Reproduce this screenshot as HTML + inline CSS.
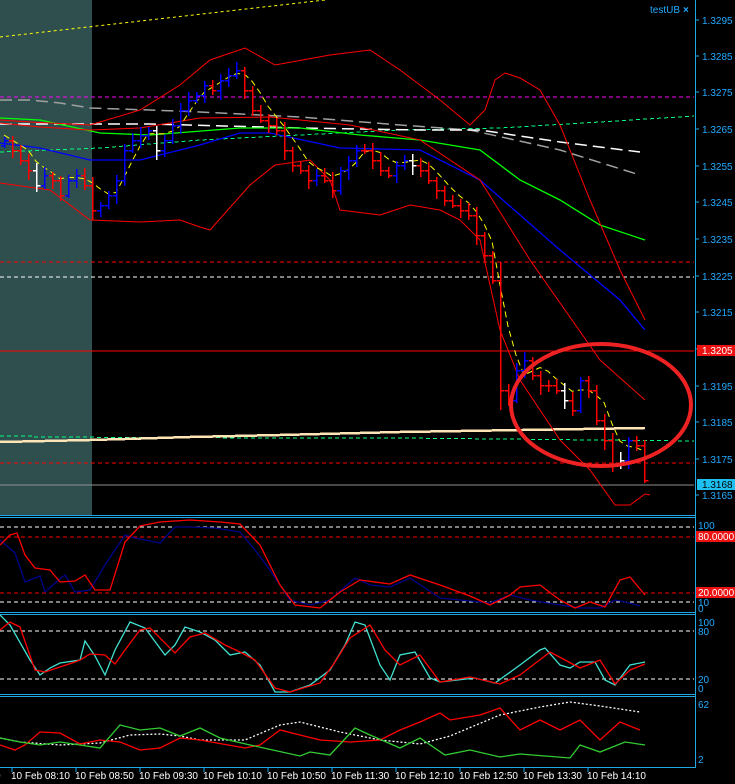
<!DOCTYPE html>
<html><head><meta charset="utf-8"><style>
html,body{margin:0;padding:0;background:#000;width:735px;height:784px;overflow:hidden}
svg{display:block}
text{font-family:"Liberation Sans",sans-serif;font-size:10px}
</style></head><body>
<svg id="s" width="735" height="784" xmlns="http://www.w3.org/2000/svg" shape-rendering="crispEdges">
<rect width="735" height="784" fill="#000"/>
<rect x="0" y="0" width="92" height="515" fill="#2f4f4f"/>
<line x1="0" y1="37" x2="325" y2="0" stroke="#ffff00" stroke-dasharray="3,3" shape-rendering="auto"/>
<line x1="0" y1="97" x2="694" y2="97" stroke="#ff00ff" stroke-dasharray="4,3"/>
<polyline points="0,152 100,148 200,140 300,135 400,130 500,128 600,122 694,116" fill="none" stroke="#00ff7f" stroke-dasharray="4,3"/>
<line x1="0" y1="262" x2="694" y2="262" stroke="#ff0000" stroke-dasharray="4,3"/>
<line x1="0" y1="277" x2="694" y2="277" stroke="#ffffff" stroke-dasharray="4,3"/>
<line x1="0" y1="351" x2="694" y2="351" stroke="#ff0000"/>
<polyline points="0,436 34,436 34,437 280,438 400,438 694,441" fill="none" stroke="#00ff7f" stroke-dasharray="4,3"/>
<polyline points="0,442 45,441 90,440 125,439 190,437 280,435 400,432 645,428" fill="none" stroke="#ffe4b5" stroke-width="2.5"/>
<line x1="0" y1="463" x2="694" y2="463" stroke="#ff0000" stroke-dasharray="4,3"/>
<line x1="0" y1="485" x2="694" y2="485" stroke="#909090"/>
<g id="ind" fill="none" shape-rendering="auto" stroke-width="1"></g>
<g id="bars"></g>
<ellipse cx="601" cy="405" rx="90" ry="61" fill="none" stroke="#ee2222" stroke-width="4" shape-rendering="auto"/>
<line x1="0" y1="527" x2="694" y2="527" stroke="#fff" stroke-dasharray="4,3"/>
<line x1="0" y1="537" x2="694" y2="537" stroke="#ff0000" stroke-dasharray="4,3"/>
<line x1="0" y1="593" x2="694" y2="593" stroke="#ff0000" stroke-dasharray="4,3"/>
<line x1="0" y1="602" x2="694" y2="602" stroke="#fff" stroke-dasharray="4,3"/>
<line x1="0" y1="631" x2="694" y2="631" stroke="#fff" stroke-dasharray="4,3"/>
<line x1="0" y1="679" x2="694" y2="679" stroke="#fff" stroke-dasharray="4,3"/>
<g fill="none" shape-rendering="auto">
<polyline stroke="#00008b" stroke-width="1.3" points="0,540 15,553 25,582 40,576 45,592 55,583 65,575 75,592 90,590 105,565 125,535 135,538 150,541 160,543 175,527 190,527 215,528 240,532 255,550 270,570 290,600 310,605 330,600 355,578 370,585 390,587 410,578 425,588 440,598 470,601 490,603 510,595 530,600 560,605 580,608 600,608 615,600 625,602 640,606"/>
<polyline stroke="#ff0000" stroke-width="1.3" points="0,545 10,535 17,533 25,555 35,568 50,570 60,582 75,581 85,575 95,590 110,590 125,542 140,526 160,522 190,520 220,522 240,524 260,545 280,585 295,605 320,608 340,592 360,580 390,584 410,575 440,585 470,596 490,605 510,595 520,587 540,585 560,600 575,608 590,602 605,607 620,580 630,577 645,595"/>
<polyline stroke="#40e0d0" stroke-width="1.3" points="0,615 10,625 30,660 40,675 50,668 60,663 80,660 85,641 95,656 105,675 115,650 130,622 145,628 165,655 175,645 185,627 200,632 215,640 230,655 245,652 260,665 275,692 290,692 310,685 330,670 345,645 355,622 365,625 380,665 390,680 400,655 415,652 430,678 440,682 475,678 495,683 520,665 540,650 545,648 560,665 570,668 580,662 595,662 605,680 615,685 630,665 645,662"/>
<polyline stroke="#ff0000" stroke-width="1.3" points="0,630 10,622 20,627 35,670 45,672 75,662 80,660 90,654 105,655 115,664 125,650 140,630 150,628 175,653 190,637 205,633 225,645 240,652 255,660 275,688 290,692 320,683 335,662 350,638 370,625 385,650 400,665 420,655 440,682 470,677 500,684 520,675 550,652 565,660 580,668 600,660 615,684 630,670 645,664"/>
<polyline stroke="#ffffff" stroke-dasharray="2,2" stroke-width="1.3" points="0,738 20,742 60,745 100,743 130,735 160,734 180,736 200,740 245,740 280,725 300,722 340,732 380,740 420,744 450,736 500,715 540,707 570,702 600,706 640,712"/>
<polyline stroke="#ff0000" stroke-width="1.3" points="0,745 15,750 25,745 40,732 60,733 80,744 100,740 120,742 140,750 160,748 180,738 200,740 245,748 260,745 280,730 300,735 320,740 350,742 380,740 400,730 420,722 440,713 450,720 480,715 500,708 520,730 540,720 560,730 580,720 600,740 620,722 640,730"/>
<polyline stroke="#32cd32" stroke-width="1.3" points="0,738 20,742 40,745 60,742 80,745 100,748 120,725 140,730 160,728 180,736 200,728 220,738 250,745 300,756 310,752 330,755 355,728 370,735 400,748 420,738 445,755 470,750 500,757 520,754 570,758 580,745 600,752 625,742 645,745"/>
</g>
<g stroke="#1ea8e8" fill="none">
<line x1="695.5" y1="0" x2="695.5" y2="768"/>
<line x1="0" y1="515.5" x2="696" y2="515.5"/>
<line x1="0" y1="517.5" x2="696" y2="517.5"/>
<line x1="0" y1="612.5" x2="696" y2="612.5"/>
<line x1="0" y1="614.5" x2="696" y2="614.5"/>
<line x1="0" y1="694.5" x2="696" y2="694.5"/>
<line x1="0" y1="696.5" x2="696" y2="696.5"/>
<line x1="0" y1="767.5" x2="696" y2="767.5"/>
</g>
<g id="ticks" stroke="#1ea8e8"></g>
<g fill="#22aaff">
<text x="650" y="13" font-size="10">testUB</text><text x="683" y="13" font-weight="bold">×</text>
<text x="702" y="24">1.3295</text><text x="702" y="60">1.3285</text><text x="702" y="96">1.3275</text>
<text x="702" y="133">1.3265</text><text x="702" y="170">1.3255</text><text x="702" y="206">1.3245</text>
<text x="702" y="243">1.3235</text><text x="702" y="280">1.3225</text><text x="702" y="316">1.3215</text>
<text x="702" y="390">1.3195</text><text x="702" y="426">1.3185</text><text x="702" y="463">1.3175</text>
<text x="702" y="499">1.3165</text>
</g>
<rect x="697" y="345" width="38" height="11" fill="#ee1111"/>
<text x="702" y="354" fill="#fff">1.3205</text>
<rect x="697" y="479" width="38" height="11" fill="#1ec0f0"/>
<text x="702" y="488" fill="#000">1.3168</text>
<rect x="696" y="531" width="39" height="11" fill="#ee1111"/>
<text x="698" y="540" fill="#fff">80.0000</text>
<rect x="696" y="587" width="39" height="11" fill="#ee1111"/>
<text x="698" y="596" fill="#fff">20.0000</text>
<g fill="#22aaff">
<text x="698" y="529">100</text><text x="698" y="606">10</text><text x="698" y="612">0</text>
<text x="698" y="626">100</text><text x="698" y="635">80</text><text x="698" y="683">20</text><text x="698" y="692">0</text>
<text x="698" y="708">62</text><text x="698" y="763">2</text>
</g>
<g fill="#ffffff" id="tl"></g>
</svg>
<script>
var NS="http://www.w3.org/2000/svg";
function el(p,n,a){var e=document.createElementNS(NS,n);for(var k in a)e.setAttribute(k,a[k]);p.appendChild(e);return e;}
var ind=document.getElementById('ind');
function pl(c,pts,w,d){var a={points:pts,stroke:c,'stroke-width':w||1,fill:'none'};if(d)a['stroke-dasharray']=d;el(ind,'polyline',a);}
pl('#a0a0a0','0,100 30,100 60,103 90,108 150,110 200,112 300,117 400,125 470,130 560,150 640,175',1.5,'12,6');
pl('#ffffff','0,124 150,124 300,128 420,130 480,130 560,142 640,152',1.5,'12,6');
pl('#00ff00','0,118 40,120 100,133 150,135 240,128 300,128 360,135 420,140 480,150 520,180 560,200 600,225 645,240',1.3);
pl('#0000ff','0,143 40,148 90,160 140,160 200,145 240,133 270,133 340,148 420,150 480,180 560,250 620,300 645,330',1.3);
pl('#ff0000','0,123 40,127 90,130 140,128 200,118 270,117 350,125 420,140 480,180 530,260 600,360 645,400',1);
pl('#ff0000','0,120 30,122 90,125 140,110 180,85 210,60 245,48 275,65 330,55 370,50 400,70 440,100 470,125 485,110 495,80 505,73 520,78 540,90 560,125 590,200 620,270 645,320',1);
pl('#ff0000','0,183 50,190 90,220 140,222 180,220 200,227 210,230 250,185 275,165 310,160 330,180 340,210 380,215 410,205 440,210 460,220 480,240 500,330 520,380 560,440 590,470 615,505 630,505 645,494 650,495',1);
var cy=[140,150,160,170,185,175,180,195,180,175,185,210,205,195,180,150,140,135,130,150,140,125,110,100,95,85,90,80,75,70,90,110,120,125,130,150,165,170,180,175,180,190,170,160,150,150,160,170,175,165,160,165,170,180,190,200,205,210,215,235,255,280,390,400,370,360,375,385,385,390,400,410,380,390,420,440,465,460,440,445,480];
var whites={4:1,19:1,51:1,70:1,77:1};
var pts=[];for(var i=0;i<cy.length;i++){var s=0,n=0;for(var j=Math.max(0,i-3);j<=i;j++){s+=cy[j];n++;}pts.push((4+i*8)+','+(s/n-5));}
pl('#ffff00',pts.join(' '),1,'6,4');
var b=document.getElementById('bars');
for(var i=0;i<cy.length;i++){var x=4+i*8,c=cy[i],p=i?cy[i-1]:c+5;var hi=Math.min(c,p)-3-(i*7%6),lo=Math.max(c,p)+3+(i*5%8);
var col=whites[i]?'#ffffff':(c>=p?'#ff0000':'#0000ff');
if(i==62){hi=262;lo=410;}
el(b,'rect',{x:x,y:hi,width:1.5,height:lo-hi,fill:col});
el(b,'rect',{x:x-3,y:p,width:3,height:1.5,fill:col});
el(b,'rect',{x:x+1.5,y:c,width:3,height:1.5,fill:col});}
var tk=document.getElementById('ticks');
[24,60,96,133,170,206,243,280,316,353,390,426,463,499].forEach(function(y){el(tk,'line',{x1:696,y1:y-4,x2:699,y2:y-4});});
var tl=document.getElementById('tl');
var lab=['08:10','08:50','09:30','10:10','10:50','11:30','12:10','12:50','13:30','14:10'];
el(tl,'text',{x:-5,y:779}).textContent='0';
for(var k=0;k<10;k++){var x=12+k*64;el(tk,'line',{x1:x,y1:768,x2:x,y2:772});el(tl,'text',{x:x-1,y:779}).textContent='10 Feb '+lab[k];}
</script>
</body></html>
